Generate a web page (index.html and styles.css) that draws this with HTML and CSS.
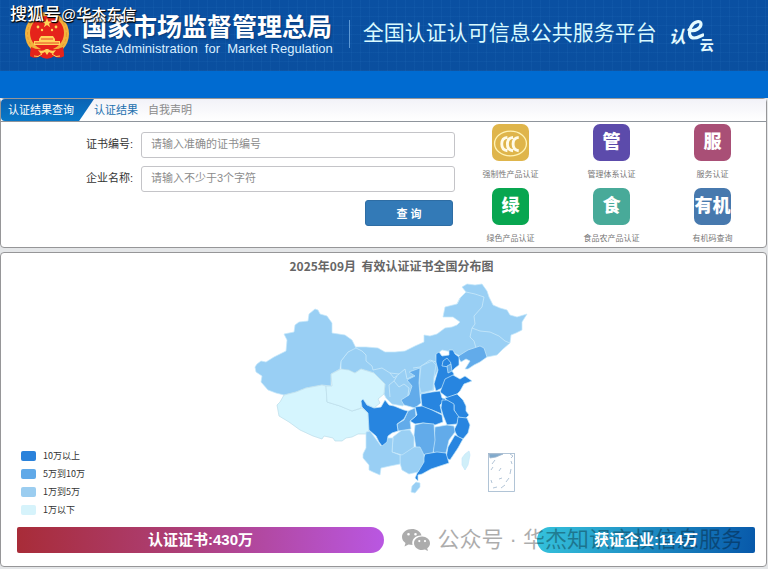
FILE: index.html
```html
<!DOCTYPE html>
<html lang="zh-CN">
<head>
<meta charset="utf-8">
<title>全国认证认可信息公共服务平台</title>
<meta name="viewport" content="width=device-width, initial-scale=1">
<link rel="stylesheet" href="styles.css">
</head>
<body>
<header class="banner">
  <svg class="emblem" viewBox="0 0 46 48" aria-hidden="true">
    <path d="M7 35 L6 44 Q11 47 16 44 Q23 49 30 44 Q35 47 40 44 L39 35Z" fill="#df241d"/>
    <circle cx="23" cy="22" r="22" fill="#f3b33d"/>
    <circle cx="23" cy="22" r="19.500" fill="none" stroke="#e69a2e" stroke-dasharray="3 2"/>
    <circle cx="23" cy="21" r="17" fill="#e5231b"/>
    <path d="M23 6l1.300 3.500h3.700l-3 2.200 1.200 3.600-3.200-2.200-3.200 2.200 1.200-3.600-3-2.200h3.700z" fill="#ffd45a"/>
    <g fill="#ffd45a"><circle cx="14" cy="15" r="1.400"/><circle cx="32" cy="15" r="1.400"/><circle cx="18" cy="18" r="1.200"/><circle cx="28" cy="18" r="1.200"/></g>
    <path d="M15 27l2-3h12l2 3v2h5v4H10v-4h5z" fill="#ffd45a"/>
    <path d="M11 31h24M17 27h12" stroke="#e5231b" stroke-width=".8"/>
    <path d="M7 35q8 4 13 1l3-2 3 2q5 3 13-1l1 9q-5 3-10 0-7 5-14 0-5 3-10 0z" fill="#e5231b"/>
    <path d="M14 38q5 2 8-1h2q3 3 8 1l-3 4-4-2-2 3-2-3-4 2z" fill="#ffd45a"/>
    <path d="M10 44q4 2 8-2M36 44q-4 2-8-2" stroke="#ffd45a" fill="none"/>
  </svg>
  <div class="agency">
    <strong>国家市场监督管理总局</strong>
    <span>State Administration&nbsp; for&nbsp; Market Regulation</span>
  </div>
  <h1>全国认证认可信息公共服务平台</h1>
  <div class="cloud-logo">
    <span>认</span>
    <svg viewBox="0 0 18 22" aria-hidden="true"><path d="M3 10C9 12 15 8 15 4C15 0 8 1 5 7C2 14 4 18 8 18C12 18 14 16 17 15" fill="none" stroke="#e4fbff" stroke-width="3.200" stroke-linecap="round"/></svg>
    <span class="cloud">云</span>
  </div>
  <div class="mark">搜狐号<span>@华杰东信</span></div>
</header>
<nav class="nav" aria-label="主导航"></nav>

<main>
  <section class="panel search">
    <div class="tabs">
      <h2>认证结果查询</h2>
      <a class="active" href="#cert">认证结果</a>
      <a href="#self">自我声明</a>
    </div>
    <div class="search-body">
      <form class="query">
        <label for="cert">证书编号:</label>
        <input id="cert" type="text" placeholder="请输入准确的证书编号">
        <label for="company">企业名称:</label>
        <input id="company" type="text" placeholder="请输入不少于3个字符">
        <button type="button">查 询</button>
      </form>
      <div class="shortcuts">
        <a href="#ccc"><b class="tile gold"><svg viewBox="0 0 36 36" aria-hidden="true"><ellipse cx="18" cy="19" rx="15.500" ry="12" fill="none" stroke="#fff3b5" stroke-width="1.300"/><path d="M15 13q-5.500 .5-5.500 6.500t5.500 6.500M20.500 13q-5.500 .5-5.500 6.500t5.500 6.500M26 13q-5.500 .5-5.500 6.500t5.500 6.500" fill="none" stroke="#fffbe8" stroke-width="2.800"/></svg></b><span>强制性产品认证</span></a>
        <a href="#system"><b class="tile purple">管</b><span>管理体系认证</span></a>
        <a href="#service"><b class="tile rose">服</b><span>服务认证</span></a>
        <a href="#green"><b class="tile green">绿</b><span>绿色产品认证</span></a>
        <a href="#food"><b class="tile teal">食</b><span>食品农产品认证</span></a>
        <a href="#organic"><b class="tile blue">有机</b><span>有机码查询</span></a>
      </div>
    </div>
  </section>

  <section class="panel overview">
    <h2>2025年09月&nbsp; 有效认证证书全国分布图</h2>
    <div class="chart">
      <ul class="legend">
        <li class="l1">10万以上</li>
        <li class="l2">5万到10万</li>
        <li class="l3">1万到5万</li>
        <li class="l4">1万以下</li>
      </ul>
      <svg class="map" viewBox="252 278 280 222" role="img" aria-label="全国分布图">
        <g class="land" stroke-linejoin="round">
          <!-- northern and north-western provinces -->
          <path class="p3" d="M356 347L366 347L378 348L385 352L395 352L405 351L415 346L424 342L424 335L430 336L437 334L445 328L452 327L457 325L460 322L453 317L443 317L445 307L457 304L460 298L466 292L462 287L467 284L475 285L482 284L487 291L489 297L493 305L500 308L507 310L510 315L517 317L527 314L522 322L522 330L516 333L511 335L510 343L503 349L497 355L487 357L480 347L468 351L460 356L452 352L442 350L436 355L437 363L438 370L434 378L434 390L421 394L408 395L403 406L392 404L386 398L384 394L385 384L374 373L361 369L355 373L341 369L341 361L348 352Z"/>
          <path class="p3" d="M315 309L318 310L320 314L327 316L332 323L332 333L345 335L352 340L356 348L348 352L341 361L340 369L331 374L331 386L322 385L306 388L296 392L284 395L276 393L268 390L261 382L262 376L256 372L255 367L257 364L261 361L266 362L274 357L286 351L287 340L284 334L294 332L295 325L299 322L308 321L309 314Z"/>
          <path class="p4" d="M284 395L296 392L306 388L322 385L326 386L327 402L340 406L352 411L362 408L368 413L369 430L366 434L358 434L352 437L346 438L342 441L335 441L333 438L324 436L322 439L313 436L300 430L289 422L279 416L277 405L280 402Z"/>
          <path class="p4" d="M331 374L341 369L349 370L355 373L361 369L374 373L385 384L384 394L378 399L380 403L374 408L366 404L362 400L361 408L352 411L340 406L327 402L326 386L332 386Z"/>
          <path class="line" d="M356 348L362 351L366 355L366 361L372 366L373 370L382 368L390 373L399 374L405 369L407 379L413 376M390 373L394 378L399 374M397 376L394 381L399 387L404 384L409 388L408 395M394 381L389 385L390 397M413 368L420 367L430 360L436 362M457 304L460 298L466 292L475 294L484 297L482 307L474 316L475 324L472 328M472 328L470 337L474 341L476 348M472 328L480 331L490 332L499 336L505 341L510 343"/>
          <path class="p2" d="M460 355L468 350L480 346L484 348L487 357L480 362L474 365L468 369L465 369L470 361L466 359L461 362L458 357Z"/>
          <path class="p3" d="M421 366L432 361L436 365L434 377L433 390L421 393L419 385Z"/>
          <path class="p2" d="M409 372L420 368L419 383L420 395L421 403L415 408L404 405L401 400L409 395L412 386L407 380L415 376Z"/>
          <!-- coastal and central provinces -->
          <path class="p1" d="M436 354L439 352L442 356L449 355L449 350L453 350L455 354L459 357L459 365L455 368L452 371L454 374L452 378L442 388L436 391L434 384L438 370L436 362Z"/>
          <path class="p1" d="M442 366L443 361L447 358L451 363L449 367Z"/>
          <path class="p2" d="M447 366L451 364L452 371L448 373Z"/>
          <path class="p1" d="M442 387L445 379L453 375L460 379L465 376L472 381L464 384L460 391L457 394L448 398L440 392Z"/>
          <path class="p1" d="M421 394L432 392L440 391L442 398L446 399L440 405L442 414L432 410L422 407L421 398Z"/>
          <path class="p1" d="M445 398L457 394L463 400L466 406L466 411L469 415L465 419L458 417L454 410L454 405L448 402Z"/>
          <path class="p1" d="M442 400L447 400L454 404L454 410L459 417L457 424L447 425L443 415L441 408Z"/>
          <path class="p1" d="M415 407L422 406L432 410L442 415L443 422L435 425L423 423L415 424L410 421L417 415Z"/>
          <path class="p1" d="M458 417L467 418L470 425L468 433L463 439L458 437L454 430L457 424Z"/>
          <path class="p1" d="M455 435L463 439L458 448L450 460L446 458L448 447Z"/>
          <path class="p2" d="M435 427L447 425L454 426L455 432L449 440L446 453L437 455L433 451L434 440Z"/>
          <path class="p2" d="M415 425L423 423L434 424L435 440L433 453L423 455L416 448L414 435Z"/>
          <path class="p1" d="M425 454L437 452L446 453L449 463L440 466L431 469L422 474L418 475L418 481L415 478L418 471L422 462Z"/>
          <path class="p3" d="M400 455L412 447L420 447L424 455L424 462L418 472L409 474L402 470L400 463Z"/>
          <path class="p3" d="M393 437L402 430L410 430L414 437L414 447L402 455L392 452Z"/>
          <path class="p2" d="M408 411L415 408L416 416L410 421L411 429L398 431L397 424L404 420Z"/>
          <path class="p3" d="M366 432L370 431L381 446L388 438L393 438L392 452L400 455L400 464L390 466L381 468L380 475L373 472L369 470L369 465L363 458L363 454L366 448Z"/>
          <path class="p1" d="M363 399L367 405L374 408L381 407L385 400L389 405L394 406L404 410L408 411L404 419L397 424L398 431L392 433L388 436L387 442L382 446L379 442L376 436L369 430L368 413L362 407L361 401Z"/>
          <path class="p3" d="M412 486L416 482L420 483L420 487L415 493L411 492Z"/>
          <path class="island" d="M465 454L469 451L470 455L468 465L465 470L462 465L462 458Z"/>
        </g>
        <g class="inset">
          <rect x="488.500" y="453.500" width="26" height="38"/>
          <path class="coast" d="M489 454h14l-7 3-6 1z"/>
          <path d="M510 454l3 2-2 2M495 460l-3 4M493 467l-2 3M491 480l1 3M493 488l4-1M501 488l4-3M506 482l3-4M510 474l1-5M512 464l-1-3M499 471l2-3M499 479l3-1"/>
        </g>
      </svg>
    </div>
    <div class="totals">
      <div class="total certs"><b>认证证书:430万</b></div>
      <div class="total firms"><b>获证企业:114万</b></div>
      <div class="account">
        <svg viewBox="0 0 28 24" aria-hidden="true"><path fill-rule="evenodd" d="M10 1C4.500 1 0 4.500 0 9c0 2.500 1.400 4.700 3.500 6l-1 3.500L6.500 16.500l4 .5C9 11 14 7 19.500 7.500C18.500 3.500 14.500 1 10 1ZM6.500 5a1.300 1.300 0 1 1 0 2.600a1.300 1.300 0 0 1 0-2.600ZM13.500 5a1.300 1.300 0 1 1 0 2.600a1.300 1.300 0 0 1 0-2.600Z"/><path fill-rule="evenodd" d="M20 8.500c-4.500 0-8 3-8 6.700s3.500 6.800 8 6.800l3-.5L26 23l-.8-2.700C27 19 28 17.200 28 15.200C28 11.500 24.500 8.500 20 8.500ZM17.300 12a1.100 1.100 0 1 1 0 2.200a1.100 1.100 0 0 1 0-2.200ZM23 12a1.100 1.100 0 1 1 0 2.200a1.100 1.100 0 0 1 0-2.200Z"/></svg>
        <span>公众号 · 华杰知识产权信息服务</span>
      </div>
    </div>
  </section>
</main>
</body>
</html>
```
FILE: styles.css
```css
* { box-sizing: border-box; }
body {
  margin: 0;
  background: #e4e6e8;
  color: #333;
  font-family: "Liberation Sans", "Noto Sans CJK SC", sans-serif;
  font-size: 11px;
}
h1, h2, ul { margin: 0; padding: 0; font-weight: 400; }
a { color: inherit; text-decoration: none; }

/* Banner */
.banner {
  position: relative;
  display: flex;
  height: 71px;
  padding: 0 24px;
  color: #fff;
  white-space: nowrap;
  background:
    repeating-linear-gradient(90deg, rgba(70, 150, 220, .08) 0 1px, transparent 1px 9px),
    repeating-linear-gradient(0deg, rgba(70, 150, 220, .08) 0 1px, transparent 1px 9px),
    linear-gradient(#0a50a2, #0a4f9f);
}
.emblem { flex: none; width: 46px; height: 48px; margin-top: 12px; }
.agency {
  display: flex;
  flex-direction: column;
  margin: 13px 0 0 12px;
}
.agency strong { font-size: 25px; line-height: 29px; text-shadow: 1px 1px 2px #063a78; }
.agency span { font-size: 13px; line-height: 13px; color: #d8eeff; }
.banner h1 {
  height: 28px;
  margin: 20px 0 0 16px;
  padding-left: 13px;
  border-left: 1px solid #5e9ad6;
  color: #d9faff;
  font-size: 21px;
  line-height: 26px;
}
.cloud-logo {
  display: flex;
  margin: 20px 0 0 12px;
  color: #e4fbff;
  font-size: 17px;
  font-weight: 700;
  font-style: italic;
  line-height: 36px;
}
.cloud-logo svg { width: 18px; height: 22px; }
.cloud-logo .cloud { font-size: 14px; font-style: normal; line-height: 50px; margin-left: -4px; }
.mark {
  position: absolute;
  top: 4px;
  left: 10px;
  font-size: 17px;
  font-weight: 500;
  line-height: 22px;
  text-shadow: 1px 1px 1px #000, 0 1px 1px #000;
}
.mark span { font-size: 15px; }
.nav { height: 27px; background: #006bd1; }

/* Panels */
.panel {
  margin-right: 1px;
  border: 1px solid #969698;
  border-radius: 4px;
  background: #fff;
}
.tabs {
  display: flex;
  align-items: stretch;
  height: 23px;
  border-bottom: 1px solid #8f959c;
  background: linear-gradient(#f2f2f8, #fff);
  color: #8a8a8a;
  line-height: 22px;
}
.tabs h2 {
  width: 93px;
  padding-left: 7px;
  border-radius: 4px 0 0 4px;
  background: linear-gradient(#0b63b4, #0878c8);
  clip-path: polygon(0 0, 100% 0, 84% 100%, 0 100%);
  color: #fff;
  font-size: 11px;
}
.tabs a { margin-right: 10px; }
.tabs .active { color: #1b6fae; }
.search-body { display: flex; height: 125px; }
.query {
  display: grid;
  flex: 0 0 60%;
  grid-template-columns: 132px 1fr;
  grid-template-rows: 26px 26px 26px;
  row-gap: 8px;
  column-gap: 8px;
  align-items: center;
  align-content: start;
  padding: 10px 5px 0 0;
}
.query label { text-align: right; white-space: nowrap; line-height: 22px; padding-bottom: 2px; }
.query input {
  width: 100%;
  min-width: 0;
  height: 26px;
  padding: 0 9px 2px;
  border: 1px solid #c4c4c8;
  border-radius: 3px;
  background: #fff;
  color: #333;
  font: inherit;
}
.query input::placeholder { color: #8c8c8c; opacity: 1; }
.query button {
  grid-column: 2;
  justify-self: end;
  width: 88px;
  height: 26px;
  margin-right: 2px;
  border: 1px solid #2e6da4;
  border-radius: 3px;
  background: #337ab7;
  color: #fff;
  font: inherit;
  font-weight: 700;
}
.shortcuts {
  display: grid;
  flex: 1;
  grid-template-columns: repeat(3, 1fr);
  grid-auto-rows: 64px;
  padding: 2px 3px 0 0;
}
.shortcuts a {
  display: flex;
  flex-direction: column;
  align-items: center;
  gap: 8px;
  color: #777;
  font-size: 8px;
  line-height: 12px;
  white-space: nowrap;
}
.tile {
  display: flex;
  justify-content: center;
  width: 37px;
  height: 37px;
  border-radius: 7px;
  color: #fff;
  font-size: 18px;
  font-weight: 900;
  line-height: 37px;
}
.tile svg { width: 37px; height: 37px; }
.gold { background: #dfb54b; }
.purple { background: #5c4bab; }
.rose { background: #a94f76; }
.green { background: #08a650; }
.teal { background: #48aa99; }
.blue { background: #4779ae; }

/* Distribution map */
.overview { margin-top: 4px; padding-bottom: 13px; }
.overview h2 {
  padding: 4px 0 0 16px;
  color: #666;
  font-family: "Noto Sans CJK SC", sans-serif;
  font-size: 12px;
  font-weight: 700;
  line-height: 18px;
  text-align: center;
}
.chart { display: flex; align-items: flex-end; padding: 3px 0 0 20px; }
.legend { flex: 0 0 231px; padding-bottom: 8px; list-style: none; font-family: "Noto Sans CJK SC", sans-serif; font-size: 9px; line-height: 18px; }
.legend li { display: flex; align-items: center; gap: 7px; }
.legend li::before { content: ""; width: 15px; height: 10px; border-radius: 2px; }
.legend .l1::before { background: #2a82db; }
.legend .l2::before { background: #60a9e8; }
.legend .l3::before { background: #9bcdf0; }
.legend .l4::before { background: #d6f3fb; }
.map { flex: 0 1 280px; width: 280px; height: 222px; margin-bottom: 27px; }
.land path { stroke: #c5e8fa; stroke-width: .7; }
.land .p1 { fill: #2785e0; }
.land .p2 { fill: #62abea; }
.land .p3 { fill: #99cff4; }
.land .p4 { fill: #d5f5fe; stroke: #bbdce9; }
.land .island { fill: #d0eff9; }
.land .line { fill: none; stroke: #d0edfb; }
.inset rect, .inset path { fill: none; stroke: #9fb6cd; stroke-width: .8; }
.inset .coast { fill: #7fa9cc; }

/* Totals */
.totals {
  position: relative;
  display: flex;
  justify-content: space-between;
  margin: 0 11px 0 16px;
}
.total {
  height: 26px;
  color: #fff;
  font-size: 15px;
  line-height: 26px;
  text-align: center;
}
.total b { position: relative; z-index: 2; }
.certs {
  flex: 0 1 367px;
  border-radius: 2px 13px 13px 2px;
  background: linear-gradient(90deg, #a82c38, #ad3f78 45%, #b957e2);
}
.firms {
  flex: 0 1 218px;
  border-radius: 13px 2px 2px 13px;
  background: linear-gradient(100deg, #35c2dc, #0758aa);
}
.account {
  position: absolute;
  z-index: 1;
  right: 12px;
  top: 0;
  display: flex;
  align-items: center;
  gap: 7px;
  opacity: .32;
  color: #000;
  font-size: 22px;
  line-height: 26px;
  white-space: nowrap;
}
.account svg { width: 28px; height: 24px; fill: #000; }
```
